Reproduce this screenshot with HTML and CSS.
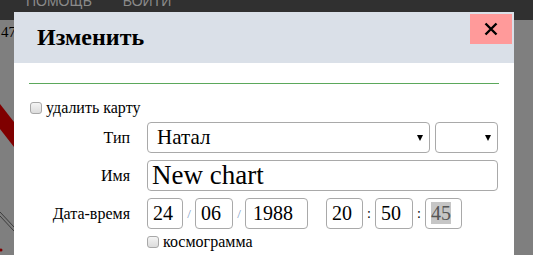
FILE: index.html
```html
<!DOCTYPE html>
<html lang="ru">
  <head>
    <meta charset="UTF-8" />
    <meta name="viewport" content="width=device-width, initial-scale=1.0" />
    <title>Изменить</title>
    <link rel="stylesheet" href="styles.css">
  </head>
  <body>
    <!-- верхнее меню -->
    <div class="topbar">
      <a href="#">Помощь</a>
      <a href="#">Войти</a>
    </div>
    <!-- страница под окном -->
    <div class="page">
      <span class="num">47</span>
      <svg class="wheel" width="14" height="255" viewBox="0 0 14 255">
        <polygon points="0,104 14,122 14,147 0,129" fill="#ff0000" />
        <line x1="0" y1="212" x2="14" y2="227" stroke="#777" stroke-width="1" />
        <line x1="0" y1="216" x2="14" y2="231" stroke="#777" stroke-width="1" />
        <circle cx="1" cy="250" r="1.5" fill="#ff0000" />
      </svg>
    </div>
    <div class="overlay"></div>

    <!-- окно редактирования -->
    <div class="modal">
      <div class="modal-head">
        <h2>Изменить</h2>
        <button type="button" class="close">
          <svg width="14" height="14" viewBox="0 0 14 14">
            <path d="M1.5 1.5 L12.5 12.5 M12.5 1.5 L1.5 12.5" stroke="#000" stroke-width="2.4" />
          </svg>
        </button>
      </div>
      <div class="modal-body">
        <hr />
        <label class="check"><input type="checkbox" /> удалить карту</label>
        <div class="form">
          <span class="label">Тип</span>
          <div class="line">
            <span class="select wide">Натал</span>
            <span class="select small"></span>
          </div>

          <span class="label">Имя</span>
          <div class="line">
            <span class="field name">New chart</span>
          </div>

          <span class="label">Дата-время</span>
          <div class="line date">
            <span class="field w35">24</span>
            <span class="slash">/</span>
            <span class="field w37">06</span>
            <span class="slash">/</span>
            <span class="field w62">1988</span>
            <span class="space"></span>
            <span class="field w36">20</span>
            <span class="colon">:</span>
            <span class="field w37">50</span>
            <span class="colon">:</span>
            <span class="field w36 sec"><mark>45</mark></span>
          </div>

          <span></span>
          <label class="check"><input type="checkbox" /> космограмма</label>
        </div>
      </div>
    </div>
  </body>
</html>
```

FILE: styles.css
```css
/* общие */
body {
  margin: 0;
  height: 255px;
  overflow: hidden;
  background: #fff;
  font-family: "Liberation Serif", "Times New Roman", serif;
  font-size: 16px;
  color: #000;
}

/* верхнее меню */
.topbar {
  height: 20px;
  background: #303030;
  display: flex;
  gap: 31px;
  padding-left: 26px;
  overflow: hidden;
}
.topbar a {
  font-family: "Liberation Sans", Arial, sans-serif;
  font-size: 14px;
  text-transform: uppercase;
  color: #8a8a8a;
  text-decoration: none;
  line-height: 16px;
  margin-top: -7px;
}

/* страница под окном */
.page {
  position: relative;
  height: 235px;
}
.num {
  position: absolute;
  left: 1px;
  top: 4px;
  font-size: 15px;
}
.wheel {
  position: absolute;
  left: 0;
  top: -20px;
}

/* затемнение */
.overlay {
  position: fixed;
  top: 20px;
  left: 0;
  right: 0;
  bottom: 0;
  background-color: rgba(0, 0, 0, 0.5);
}

/* окно */
.modal {
  position: absolute;
  top: 12px;
  left: 14px;
  width: 500px;
  height: 260px;
  background: #fff;
}
.modal-head {
  height: 51px;
  background: #dae0e8;
  display: flex;
  align-items: center;
  padding-left: 23px;
}
.modal-head h2 {
  margin: 0;
  font-size: 24px;
  font-weight: bold;
}
.close {
  position: absolute;
  top: 2px;
  right: 2px;
  width: 42px;
  height: 30px;
  border: 0;
  padding: 0;
  background: #ff9a9a;
  display: flex;
  align-items: center;
  justify-content: center;
}

.modal-body {
  padding: 0 15px;
}
.modal-body hr {
  margin: 20px 0 0;
  border: 0;
  border-top: 1px solid #5ba85b;
}

/* чекбоксы */
.check {
  display: flex;
  align-items: center;
  gap: 4px;
  line-height: 18px;
}
.modal-body > .check {
  margin: 15px 0 0 1px;
}
.check input {
  appearance: none;
  width: 12px;
  height: 12px;
  margin: 0;
  border: 1px solid #a8a8a8;
  border-radius: 3px;
  background: linear-gradient(#f4f4f4, #dcdcdc);
}

/* форма */
.form {
  display: grid;
  grid-template-columns: 101px 1fr;
  column-gap: 17px;
  row-gap: 7px;
  margin-top: 5px;
  align-items: center;
}
.label {
  text-align: right;
  padding-top: 1px;
}
.line {
  display: flex;
  align-items: center;
}

.select,
.field {
  box-sizing: border-box;
  height: 31px;
  border: 1px solid #a9a9a9;
  border-radius: 4px;
  font-size: 20px;
  line-height: 29px;
  background: #fff;
}
.select {
  position: relative;
  padding-left: 9px;
  font-size: 21px;
}
.select::after {
  content: "";
  position: absolute;
  right: 6px;
  top: 12px;
  border-left: 3px solid transparent;
  border-right: 3px solid transparent;
  border-top: 6px solid #000;
}
.wide {
  width: 283px;
}
.small {
  width: 63px;
  margin-left: 5px;
}

.field {
  padding-left: 5px;
}
.name {
  width: 351px;
  font-size: 27px;
  padding-left: 4px;
}
.w35 { width: 36px; }
.w36 { width: 37px; }
.w37 { width: 38px; }
.w62 { width: 63px; padding-left: 7px; }

.slash {
  width: 12px;
  text-align: center;
  font-size: 13px;
  color: #7d9bc3;
}
.colon {
  width: 12px;
  text-align: center;
  font-size: 14px;
}
.space {
  width: 18px;
}
.sec mark {
  background: #c6c6c6;
  color: #555;
}

.form > .check {
  margin-top: -3px;
}
```
